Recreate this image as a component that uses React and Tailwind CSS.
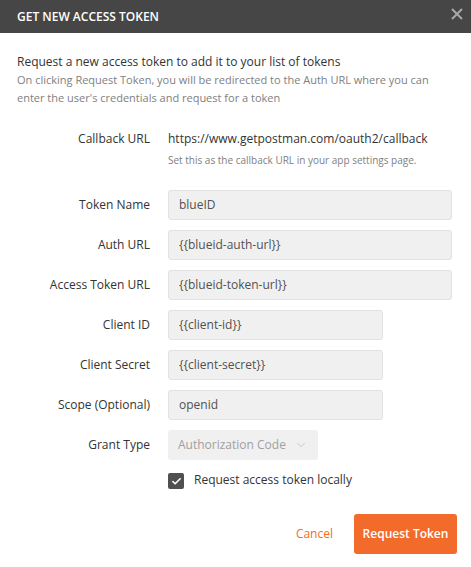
import { Check, ChevronDown } from "lucide-react";

const fields = [
  { label: "Token Name", value: "blueID", wide: true },
  { label: "Auth URL", value: "{{blueid-auth-url}}", wide: true },
  { label: "Access Token URL", value: "{{blueid-token-url}}", wide: true },
  { label: "Client ID", value: "{{client-id}}" },
  { label: "Client Secret", value: "{{client-secret}}" },
  { label: "Scope (Optional)", value: "openid" },
];

function Row({ label, children, className = "" }) {
  return (
    <div className={`flex items-center gap-[18px] ${className}`}>
      <div className="w-[150px] shrink-0 text-right text-[12px] leading-[18px] text-[#333]">{label}</div>
      {children}
    </div>
  );
}

export default function App() {
  return (
    <div className="w-[471px] h-[567px] bg-white font-['Open_Sans',sans-serif] text-[#333]">
      <div className="h-[33px] bg-[#464646] flex items-center justify-between pl-[17px] pr-[8px]">
        <h1 className="text-[12px] font-semibold text-white">GET NEW ACCESS TOKEN</h1>
        <svg width="12" height="12" viewBox="0 0 12 12" className="-mt-[5px]">
          <path d="M1 1 L11 11 M11 1 L1 11" stroke="#a8a8a8" strokeWidth="2" />
        </svg>
      </div>

      <div className="px-[17px] pt-[20px]">
        <p className="text-[12px] leading-[18px] text-[#333]">Request a new access token to add it to your list of tokens</p>
        <p className="text-[11px] leading-[18px] text-[#808080]">
          On clicking Request Token, you will be redirected to the Auth URL where you can enter the user's credentials and request for a token
        </p>
      </div>

      <div className="pt-[23px] pr-[19px]">
        <Row label="Callback URL" className="!items-start">
          <div>
            <div className="text-[12px] leading-[18px] text-[#333]">https://www.getpostman.com/oauth2/callback</div>
            <div className="mt-[5px] text-[10px] leading-[14px] text-[#808080]">Set this as the callback URL in your app settings page.</div>
          </div>
        </Row>

        <div className="mt-[23px] flex flex-col gap-[10px]">
          {fields.map((f) => (
            <Row key={f.label} label={f.label}>
              <div
                className={`h-[30px] ${f.wide ? "flex-1" : "w-[215px]"} rounded-[3px] border border-[#e2e2e2] bg-[#f0f0f0] px-[10px] flex items-center text-[12px] text-[#505050]`}
              >
                {f.value}
              </div>
            </Row>
          ))}
          <Row label="Grant Type">
            <div className="h-[30px] w-[150px] rounded-[3px] bg-[#f0f0f0] pl-[10px] pr-[10px] flex items-center justify-between text-[12px] text-[#a0a0a0]">
              <span>Authorization Code</span>
              <ChevronDown className="w-[14px] h-[14px] text-[#c0c0c0]" strokeWidth={1.5} />
            </div>
          </Row>
        </div>

        <div className="mt-[13px] ml-[168px] flex items-center gap-[10px]">
          <div className="w-[16px] h-[16px] rounded-[2px] bg-[#505050] flex items-center justify-center">
            <Check className="w-[11px] h-[11px] text-white" strokeWidth={3.5} />
          </div>
          <span className="-mt-[3px] text-[12px] leading-[16px] text-[#333]">Request access token locally</span>
        </div>

        <div className="mt-[25px] flex items-center justify-end gap-[21px]">
          <button className="text-[12px] text-[#f26b2a]">Cancel</button>
          <button className="h-[40px] w-[103px] rounded-[3px] bg-[#f26b2a] text-[12px] font-semibold text-white -mr-[5px]">
            Request Token
          </button>
        </div>
      </div>
    </div>
  );
}
